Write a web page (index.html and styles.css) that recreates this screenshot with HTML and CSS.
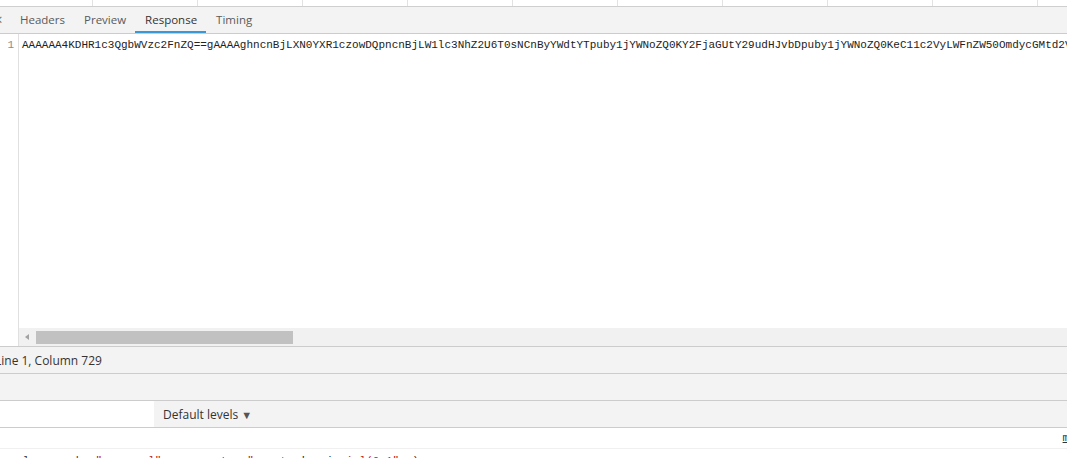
FILE: index.html
```html
<!DOCTYPE html>
<html lang="en">
<head>
    <meta charset="UTF-8">
    <title>Response</title>
    <link rel="stylesheet" href="styles.css">
</head>
<body>
    <div class="gridHead">
        <div class="col first"></div>
        <div class="col"></div>
        <div class="col"></div>
        <div class="col"></div>
        <div class="col"></div>
        <div class="col"></div>
        <div class="col"></div>
        <div class="col"></div>
        <div class="col"></div>
        <div class="col"></div>
        <div class="col last"></div>
    </div>
    <div class="tabs">
        <span class="close">&times;</span>
        <span class="tab">Headers</span>
        <span class="tab">Preview</span>
        <span class="tab selected">Response</span>
        <span class="tab">Timing</span>
    </div>
    <div class="editor">
        <div class="gutter">
            <div class="lineNum">1</div>
        </div>
        <div class="codeArea">
            <div class="code">AAAAAA4KDHR1c3QgbWVzc2FnZQ==gAAAAghncnBjLXN0YXR1czowDQpncnBjLW1lc3NhZ2U6T0sNCnByYWdtYTpuby1jYWNoZQ0KY2FjaGUtY29udHJvbDpuby1jYWNoZQ0KeC11c2VyLWFnZW50OmdycGMtd2ViLWphdmFzY3JpcHQvMC4xDQo=</div>
            <div class="hscroll">
                <span class="arrow"></span>
                <span class="thumb"></span>
            </div>
        </div>
    </div>
    <div class="status">
        <span class="pos">Line 1, Column 729</span>
    </div>
    <div class="drawerBar"></div>
    <div class="filterBar">
        <div class="filterInput"></div>
        <span class="levels">Default levels <span class="caret">&#9660;</span></span>
    </div>
    <div class="console">
        <div class="msg first"><span class="link">main.js:1</span></div>
        <div class="msg second"><span class="txt">   l   a   k  </span><span class="str">"</span><span class="txt">   e   </span><span class="str">l"</span><span class="txt">         t   </span><span class="str">"</span><span class="txt">    </span><span class="str">t</span><span class="txt">  '   </span><span class="txt">i</span><span class="str">  i </span><span class="str">l(0.1" </span><span class="txt"> )</span></div>
    </div>
</body>
</html>
```

FILE: styles.css
```css
*{
    padding: 0px;
    margin: 0px;
    box-sizing: border-box;
}
body{
    width: 1067px;
    height: 458px;
    overflow: hidden;
    background: #ffffff;
    font-family: "Open Sans", "Noto Sans", sans-serif;
    font-size: 12px;
    color: #333333;
}
.gridHead{
    display: flex;
    height: 7px;
    border-bottom: 1px solid #cfcfcf;
    background: #ffffff;
}
.col{
    width: 105px;
    flex-shrink: 0;
    border-right: 1px solid #e2e2e2;
}
.col.first{
    width: 93px;
}
.col.last{
    flex: 1;
    border-right: none;
}
.tabs{
    display: flex;
    align-items: stretch;
    height: 27px;
    background: #f3f3f3;
    border-bottom: 1px solid #cccccc;
}
.close{
    width: 16px;
    margin-left: -6px;
    line-height: 25px;
    font-size: 15px;
    color: #6e6e6e;
}
.tab{
    padding: 0px 9px 0px 10px;
    line-height: 25px;
    color: #5a5a5a;
    border-bottom: 2px solid transparent;
    font-size: 11.5px;
}
.tab.selected{
    color: #333333;
    border-bottom-color: #3b98d6;
}
.editor{
    display: flex;
    height: 312px;
    background: #ffffff;
}
.gutter{
    width: 19px;
    border-right: 1px solid #e0e0e0;
    font-family: "Liberation Mono", monospace;
    font-size: 11px;
    color: #8a8a8a;
    text-align: right;
    padding-right: 4px;
    padding-top: 4px;
}
.codeArea{
    flex: 1;
    display: flex;
    flex-direction: column;
    justify-content: space-between;
    overflow: hidden;
}
.code{
    font-family: "Liberation Mono", monospace;
    font-size: 11px;
    line-height: 14px;
    color: #222222;
    white-space: nowrap;
    padding: 4px 0px 0px 3px;
}
.lineNum{
    line-height: 14px;
}
.hscroll{
    display: flex;
    align-items: center;
    height: 18px;
    background: #f1f1f1;
    padding-left: 6px;
}
.arrow{
    width: 0px;
    height: 0px;
    border-top: 3px solid transparent;
    border-bottom: 3px solid transparent;
    border-right: 4px solid #a3a3a3;
    margin-right: 7px;
}
.thumb{
    width: 257px;
    height: 13px;
    background: #c1c1c1;
}
.status{
    height: 27px;
    background: #f3f3f3;
    border-top: 1px solid #cccccc;
    display: flex;
    align-items: center;
}
.pos{
    margin-left: -5px;
    color: #333333;
}
.drawerBar{
    height: 27px;
    background: #f3f3f3;
    border-top: 1px solid #cccccc;
}
.filterBar{
    height: 27px;
    background: #f3f3f3;
    border-top: 1px solid #cccccc;
    display: flex;
    align-items: center;
}
.filterInput{
    width: 154px;
    height: 26px;
    background: #ffffff;
}
.levels{
    margin-left: 9px;
    color: #333333;
}
.caret{
    font-size: 11px;
    color: #555555;
}
.console{
    border-top: 1px solid #cccccc;
    background: #ffffff;
    height: 31px;
}
.msg.first{
    height: 21px;
    border-bottom: 1px solid #f0f0f0;
    display: flex;
    justify-content: flex-end;
    align-items: center;
}
.link{
    font-family: "Liberation Mono", monospace;
    font-size: 11px;
    color: #333333;
    text-decoration: underline;
    white-space: nowrap;
    margin-right: -55px;
}
.msg.second{
    font-family: "Liberation Mono", monospace;
    font-size: 11px;
    line-height: 14px;
    white-space: pre;
    padding-top: 5px;
    padding-left: 3px;
}
.txt{
    color: #333333;
}
.str{
    color: #c41a16;
}
```
